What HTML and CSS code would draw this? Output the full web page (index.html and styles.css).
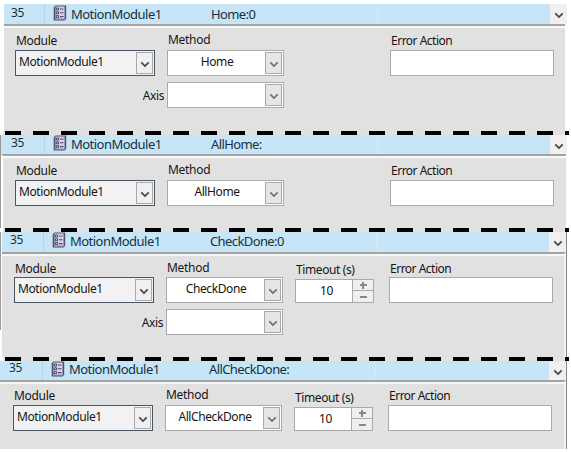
FILE: index.html
```
<!DOCTYPE html>
<html lang="en">
<head>
<meta charset="utf-8">
<title>Motion module methods</title>
<link rel="stylesheet" href="styles.css">
</head>
<body>
<svg width="0" height="0" class="defs">
  <symbol id="list" viewBox="0 0 14 16">
    <path d="M2.5.5h10.7v13.2l-1.7 1.8H.7V2.2z" fill="#55506c"/>
    <path d="M2.5 1.5h9v12.6h-9z" fill="#d5d1e6"/>
    <path d="M11.5 2v12H2" fill="none" stroke="#9d98b8"/>
    <path d="M3.4 3h2.2v2H3.4zM3.4 6.8h2.2v2H3.4zM3.4 10.6h2.2v2H3.4z" fill="#f4f1ff" stroke="#373153" stroke-width=".9"/>
    <path d="M7 4h3.5M7 7.8h3.5M7 11.6h3.5" stroke="#504967" stroke-width="1.1"/>
  </symbol>
  <symbol id="down" viewBox="0 0 10 7"><path d="M1.3 1.4 5 5l3.7-3.6" fill="none" stroke="currentColor" stroke-width="1.7"/></symbol>
</svg>

<section class="block one">
  <header class="bar"><span class="num">35</span><svg class="list"><use href="#list"/></svg><span class="name">MotionModule1</span><span class="call">Home:0</span><span class="scroll"><svg class="down"><use href="#down"/></svg></span></header>
  <div class="panel">
    <label class="module">Module</label><label class="method">Method</label><label class="error">Error Action</label>
    <div class="combo strong module"><span>MotionModule1</span><b><svg class="down"><use href="#down"/></svg></b></div>
    <div class="combo method"><span>Home</span><b><svg class="down"><use href="#down"/></svg></b></div>
    <div class="box error"></div>
    <label class="axis">Axis</label>
    <div class="combo method low"><span></span><b><svg class="down"><use href="#down"/></svg></b></div>
  </div>
</section>
<div class="dash"></div>
<section class="block two">
  <header class="bar"><span class="num">35</span><svg class="list"><use href="#list"/></svg><span class="name">MotionModule1</span><span class="call">AllHome:</span><span class="scroll"><svg class="down"><use href="#down"/></svg></span></header>
  <div class="panel">
    <label class="module">Module</label><label class="method">Method</label><label class="error">Error Action</label>
    <div class="combo strong module"><span>MotionModule1</span><b><svg class="down"><use href="#down"/></svg></b></div>
    <div class="combo method"><span>AllHome</span><b><svg class="down"><use href="#down"/></svg></b></div>
    <div class="box error"></div>
  </div>
</section>
<div class="dash"></div>
<section class="block three">
  <header class="bar"><span class="num">35</span><svg class="list"><use href="#list"/></svg><span class="name">MotionModule1</span><span class="call">CheckDone:0</span><span class="scroll"><svg class="down"><use href="#down"/></svg></span></header>
  <div class="panel">
    <label class="module">Module</label><label class="method">Method</label><label class="time">Timeout (s)</label><label class="error">Error Action</label>
    <div class="combo strong module"><span>MotionModule1</span><b><svg class="down"><use href="#down"/></svg></b></div>
    <div class="combo method"><span>CheckDone</span><b><svg class="down"><use href="#down"/></svg></b></div>
    <div class="spin time"><span>10</span><i class="plus"></i><i></i></div>
    <div class="box error"></div>
    <label class="axis">Axis</label>
    <div class="combo method low"><span></span><b><svg class="down"><use href="#down"/></svg></b></div>
  </div>
</section>
<div class="dash"></div>
<section class="block four">
  <header class="bar"><span class="num">35</span><svg class="list"><use href="#list"/></svg><span class="name">MotionModule1</span><span class="call">AllCheckDone:</span><span class="scroll"><svg class="down"><use href="#down"/></svg></span></header>
  <div class="panel">
    <label class="module">Module</label><label class="method">Method</label><label class="time">Timeout (s)</label><label class="error">Error Action</label>
    <div class="combo strong module"><span>MotionModule1</span><b><svg class="down"><use href="#down"/></svg></b></div>
    <div class="combo method"><span>AllCheckDone</span><b><svg class="down"><use href="#down"/></svg></b></div>
    <div class="spin time"><span>10</span><i class="plus"></i><i></i></div>
    <div class="box error"></div>
  </div>
</section>
</body>
</html>
```
FILE: styles.css
```
* { box-sizing: border-box; }
body { margin: 0; width: 571px; height: 452px; overflow: hidden; background: #fff; color: #151515; font: 12px/16px "Noto Sans", "Open Sans", sans-serif; letter-spacing: -.4px; }
.defs { position: absolute; }
.block { --lead: 0px; display: flex; flex-direction: column; width: 567px; }
.one { height: 131px; padding: 4px 0 0 4px; --lead: -4px; }
.two { height: 93px; border-left: 1px solid #999; --lead: -1px; }
.three { height: 125px; padding-left: 2px; --lead: -3px; border-right: 1px solid #888; background: linear-gradient(#999, #999) 0 0 / 1px 98px no-repeat; }
.four { height: 88px; --lead: -2px; border-right: 1px solid #888; }

.bar { flex: none; height: 20px; display: flex; background: #c6e6f8; color: #16303f; font-size: 13px; }
.bar > span:not(.scroll) { white-space: nowrap; }
.num { width: calc(45px + var(--lead)); padding-left: calc(11px + var(--lead)); border-right: 1px dotted #a7c5d5; font-size: 12px; line-height: 18px; }
.list { width: 14px; height: 16px; margin: 1px 4px 0 8px; }
.name { width: 140px; line-height: 21px; letter-spacing: -.52px; }
.call { flex: 1; line-height: 21px; letter-spacing: -.6px; background: linear-gradient(#d5e9f3, #d5e9f3) 166px 0 / 1px 100% no-repeat; }
.scroll { width: 17px; background: #f0f0f0; color: #444; padding: 8px 0 0 4px; line-height: 0; }
.down { display: block; width: 10px; height: 7px; }
.two .bar, .four .bar { height: 19px; }
.two .list, .three .list, .four .list { margin-top: 0; }
.two .num, .three .num { line-height: 16px; }
.four .num { line-height: 14px; }
.two .name, .two .call, .three .name, .three .call { line-height: 18px; }
.four .name, .four .call { line-height: 17px; }

.panel { flex: 1; display: grid; grid-template-columns: 140px 12px 117px 12px 79px 15px 164px; grid-template-rows: 20px 26px 6px 26px; padding-left: calc(15px + var(--lead)); padding-top: 4px; border-top: 2px solid #a3a3a3; background: #e1e1e1; box-shadow: inset 0 2px #f8f8f8; }
.one .panel { margin-right: 2px; }
.two .panel { grid-template-rows: 20px 26px; border-left: 2px solid #fff; padding-left: 12px; margin-right: 1px; }
.three .panel { padding-top: 3px; border-right: 2px solid #f4f4f4; }
.four .panel { padding-top: 2px; grid-template-rows: 21px 26px; border-right: 2px solid #f4f4f4; }
.module { grid-column: 1; }
.method { grid-column: 3; }
.time { grid-column: 5; }
.error { grid-column: 7; }
label { grid-row: 1; padding: 3px 0 0 1px; white-space: nowrap; }
label.module, label.method { letter-spacing: -.3px; }
label.method { padding-top: 2px; }
label.time { padding-top: 5px; }
label.error { letter-spacing: -.5px; }
label.axis { grid-row: 4; grid-column: 1 / 3; justify-self: end; padding: 6px 3px 0 0; }
.three label { padding-top: 4px; }
.three label.method { padding-top: 3px; }
.three label.time { padding-top: 5px; }
.three label.axis { padding-top: 6px; }
.four label { margin-top: 1px; }

.combo, .box, .spin { grid-row: 2; border: 1px solid #aaa; background: #fff; }
.low { grid-row: 4; }
.combo { display: flex; padding: 1px; }
.combo span { flex: 1; text-align: center; line-height: 19px; white-space: nowrap; }
.combo b { width: 17px; border: 1px solid #a9a9a9; background: #e5e5e5; color: #707070; padding: 8px 0 0 3px; }
.strong { border-color: #4c5765; background: #f2f2f2; }
.strong span { text-align: left; padding-left: 2px; line-height: 20px; }
.strong b { background: #f0f0f0; color: #454545; }
.spin { margin-top: 2px; display: grid; grid-template-columns: 1fr 21px; grid-template-rows: 1fr 1fr; }
.spin span { grid-row: 1 / 3; text-align: center; line-height: 21px; padding-left: 5px; }
.spin i { border-left: 1px solid #aaa; background: linear-gradient(#888, #888) center / 7px 2px no-repeat #efefef; }
.spin .plus { border-bottom: 1px solid #aaa; background: linear-gradient(#888, #888) center / 7px 2px no-repeat, linear-gradient(#888, #888) center / 2px 7px no-repeat #efefef; }

.dash { width: 569px; height: 4px; padding-left: 5px; background: repeating-linear-gradient(90deg, #000 0 16px, transparent 16px 28px) content-box, linear-gradient(#e1e1e1, #e1e1e1) 3px 0 / 563px 100% no-repeat; background-origin: content-box, border-box; }
```
